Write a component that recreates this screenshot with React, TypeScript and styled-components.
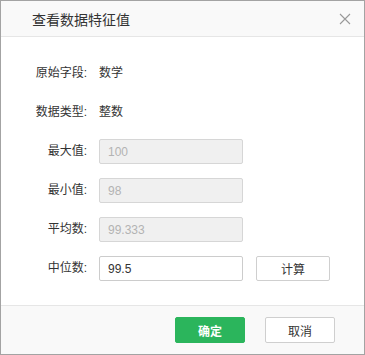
import React from "react";
import styled, { createGlobalStyle } from "styled-components";

const GlobalStyle = createGlobalStyle`
  html, body {
    margin: 0;
    padding: 0;
    background: #fff;
  }
  body {
    font-family: "Liberation Sans", "Noto Sans CJK SC", sans-serif;
    font-size: 12px;
    color: #333;
  }
`;

const Dialog = styled.div`
  box-sizing: border-box;
  width: 365px;
  height: 355px;
  border: 1px solid #a3a3a3;
  display: flex;
  flex-direction: column;
  background: #fff;
`;

const Header = styled.div`
  height: 35px;
  flex-shrink: 0;
  display: flex;
  align-items: center;
  justify-content: space-between;
  padding: 0 11px 0 31px;
  background: #f9f9f9;
  border-bottom: 1px solid #e6e6e6;
`;

const Title = styled.div`
  font-size: 14px;
  color: #333;
  letter-spacing: 0;
`;

const Close = styled.button`
  width: 16px;
  height: 16px;
  padding: 0;
  border: none;
  background: none;
  display: flex;
  align-items: center;
  justify-content: center;
  cursor: pointer;
`;

const Body = styled.div`
  flex: 1;
  padding-top: 24px;
  display: grid;
  grid-template-columns: 86px 144px 74px;
  grid-auto-rows: 25px;
  column-gap: 12px;
  row-gap: 14px;
  align-content: start;
`;

const Label = styled.div`
  text-align: right;
  line-height: 25px;
  color: #333;
  white-space: nowrap;
`;

const Value = styled.div`
  grid-column: 2 / span 2;
  line-height: 25px;
  color: #333;
`;

const Field = styled.input<{ $disabled?: boolean }>`
  box-sizing: border-box;
  width: 144px;
  height: 25px;
  margin: 0;
  padding: 0 8px;
  border: 1px solid ${(p) => (p.$disabled ? "#d6d6d6" : "#cccccc")};
  border-radius: 2px;
  background: ${(p) => (p.$disabled ? "#f0f0f0" : "#fff")};
  color: ${(p) => (p.$disabled ? "#b3b3b3" : "#333")};
  font-family: "Liberation Sans", "Noto Sans CJK SC", sans-serif;
  font-size: 12px;
  outline: none;
`;

const Spacer = styled.div``;

const Button = styled.button<{ $primary?: boolean; $w: number }>`
  box-sizing: border-box;
  width: ${(p) => p.$w}px;
  height: ${(p) => (p.$primary !== undefined ? 26 : 25)}px;
  padding: 0;
  border-radius: 2px;
  border: 1px solid ${(p) => (p.$primary ? "#2bb55c" : "#cfcfcf")};
  background: ${(p) => (p.$primary ? "#2bb55c" : "#fff")};
  color: ${(p) => (p.$primary ? "#fff" : "#333")};
  font-family: "Liberation Sans", "Noto Sans CJK SC", sans-serif;
  font-size: 12px;
  font-weight: ${(p) => (p.$primary ? 700 : 400)};
  cursor: pointer;
`;

const CalcButton = styled(Button)`
  margin-left: 1px;
`;

const Footer = styled.div`
  height: 49px;
  flex-shrink: 0;
  box-sizing: border-box;
  border-top: 1px solid #e6e6e6;
  background: #f9f9f9;
  display: flex;
  justify-content: flex-end;
  align-items: flex-start;
  gap: 20px;
  padding: 11px 29px 0 0;
`;

const CloseIcon = () => (
  <svg width="12" height="12" viewBox="0 0 12 12">
    <path d="M1 1L11 11M11 1L1 11" stroke="#999" strokeWidth="1.1" />
  </svg>
);

const stats = [
  { label: "最大值:", value: "100" },
  { label: "最小值:", value: "98" },
  { label: "平均数:", value: "99.333" },
];

export default function App() {
  return (
    <>
      <GlobalStyle />
      <Dialog>
        <Header>
          <Title>查看数据特征值</Title>
          <Close aria-label="close">
            <CloseIcon />
          </Close>
        </Header>
        <Body>
          <Label>原始字段:</Label>
          <Value>数学</Value>
          <Label>数据类型:</Label>
          <Value>整数</Value>
          {stats.map((s) => (
            <React.Fragment key={s.label}>
              <Label>{s.label}</Label>
              <Field $disabled readOnly value={s.value} />
              <Spacer />
            </React.Fragment>
          ))}
          <Label>中位数:</Label>
          <Field readOnly value="99.5" />
          <CalcButton $w={74}>计算</CalcButton>
        </Body>
        <Footer>
          <Button $primary $w={70}>确定</Button>
          <Button $primary={false} $w={70}>取消</Button>
        </Footer>
      </Dialog>
    </>
  );
}
